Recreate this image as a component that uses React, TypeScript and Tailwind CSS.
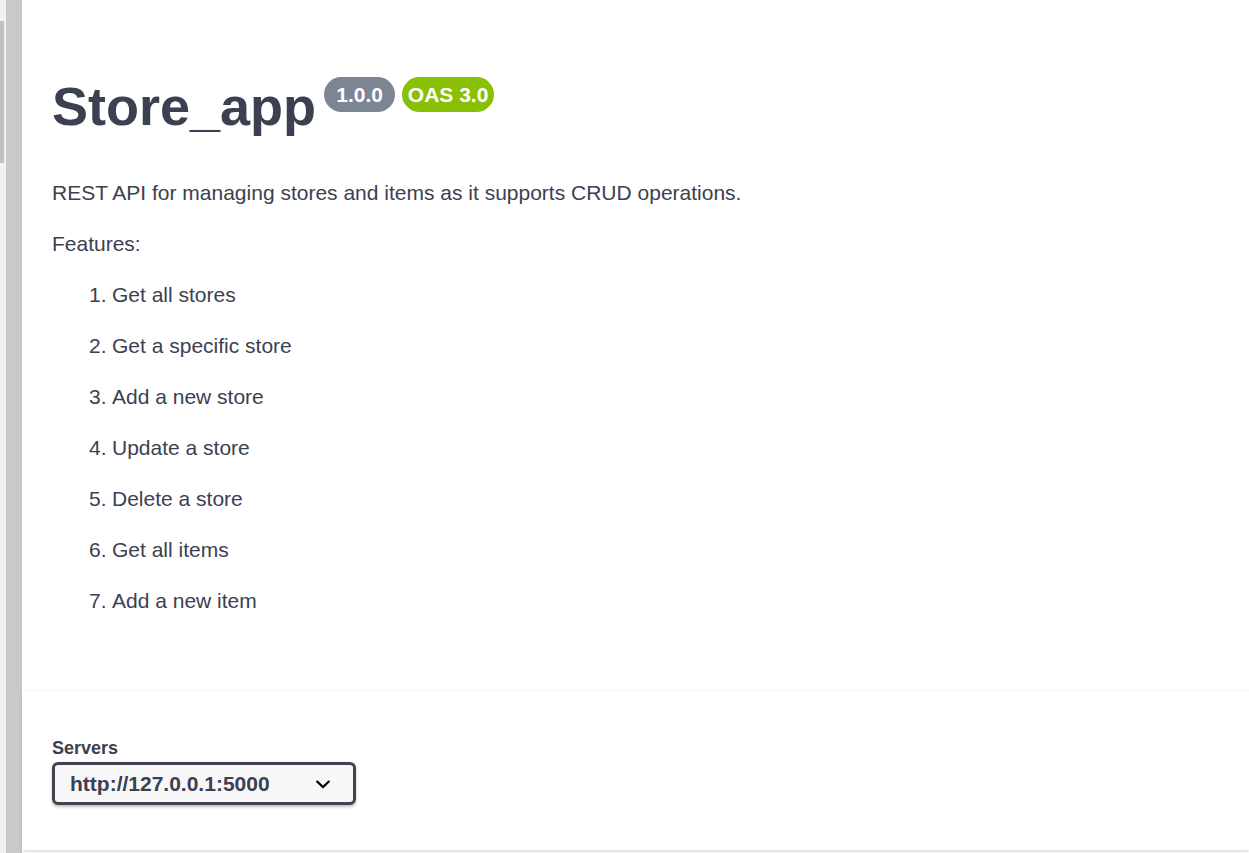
import React from "react";

const items = [
  "Get all stores",
  "Get a specific store",
  "Add a new store",
  "Update a store",
  "Delete a store",
  "Get all items",
  "Add a new item",
];

export default function App() {
  return (
    <div
      className="flex h-[853px] w-[1249px] overflow-hidden bg-white text-[#3b4151]"
      style={{ fontFamily: '"Liberation Sans", Arial, sans-serif' }}
    >
      <div className="w-[6px] shrink-0 bg-[#f1f1f1]">
        <div className="mt-[21px] h-[142px] w-[4px] bg-[#c1c1c1]" />
      </div>
      <div className="w-[16px] shrink-0 bg-[#c9c9c9]" />
      <div className="flex flex-1 flex-col">
        <div className="pl-[30px] pt-[77px]">
          <div className="flex h-[90px] items-start">
            <h2 className="mt-[2px] text-[54px] font-bold leading-none">Store_app</h2>
            <span className="ml-[8px] flex h-[35px] w-[71px] items-center justify-center rounded-full bg-[#7d8492] text-[21px] font-bold text-white">
              1.0.0
            </span>
            <span className="ml-[7px] flex h-[35px] w-[92px] items-center justify-center rounded-full bg-[#89bf04] text-[21px] font-bold text-white">
              OAS 3.0
            </span>
          </div>
          <div className="text-[21px] leading-[51px]">
            <p>REST API for managing stores and items as it supports CRUD operations.</p>
            <p>Features:</p>
            <ol>
              {items.map((t, i) => (
                <li key={t} className="flex pl-[37px]">
                  <span className="w-[23px]">{i + 1}.</span>
                  <span>{t}</span>
                </li>
              ))}
            </ol>
          </div>
          <div className="h-[64px]" />
        </div>
        <div className="border-t border-[#f6f6f6] bg-white pb-[45px] pl-[30px] pt-[43px] shadow-[0_1.5px_3px_0_rgba(0,0,0,0.15)]">
          <div className="text-[18px] font-bold leading-[28px]">Servers</div>
          <div className="flex h-[43px] w-[304px] items-center justify-between rounded-[6px] border-[3px] border-[#41444e] bg-[#f7f7f7] pl-[15px] pr-[15px] shadow-[0_1.5px_3px_0_rgba(0,0,0,0.25)]">
            <span className="text-[21px] font-bold leading-none">http://127.0.0.1:5000</span>
            <svg width="30" height="30" viewBox="0 0 20 20">
              <path
                fill="#000"
                d="M13.418 7.859a.695.695 0 0 1 .978 0 .68.68 0 0 1 0 .969l-3.908 3.83a.697.697 0 0 1-.979 0l-3.908-3.83a.68.68 0 0 1 0-.969.695.695 0 0 1 .978 0L10 11l3.418-3.141z"
              />
            </svg>
          </div>
        </div>
      </div>
    </div>
  );
}
